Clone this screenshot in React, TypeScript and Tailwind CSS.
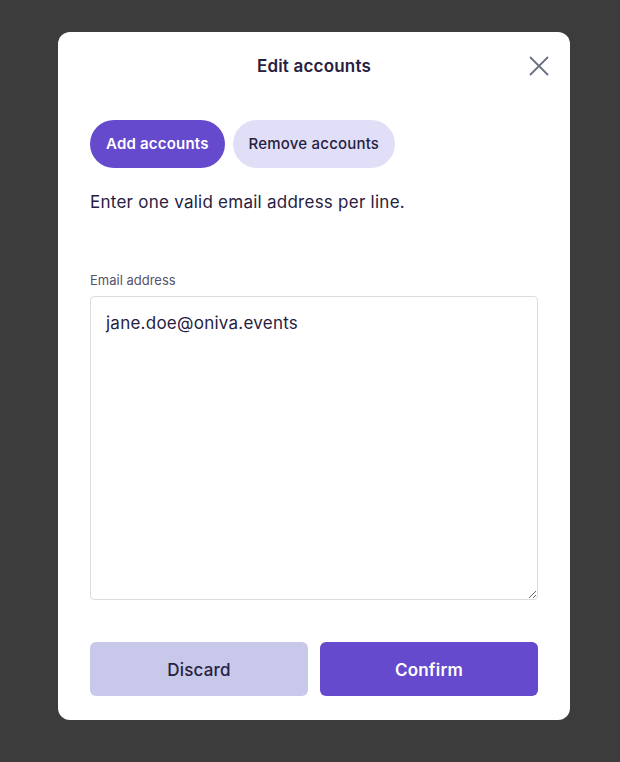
const App = () => {
  return (
    <div
      className="min-h-[762px] w-full bg-[#3c3c3c] pt-[32px] pl-[58px]"
      style={{ fontFamily: "Inter, 'Noto Sans', sans-serif" }}
    >
      <div className="w-[512px] rounded-[12px] bg-white px-[32px] pb-[24px]">
        <div className="relative flex h-[68px] items-center justify-center">
          <h2 className="mt-[2px] text-[17px] font-semibold tracking-[0.2px] text-[#27213f]">Edit accounts</h2>
          <button className="absolute right-[-11px] top-[24px] text-[#6b7083]">
            <svg width="20" height="20" viewBox="0 0 20 20" fill="none" stroke="currentColor" strokeWidth="1.8" strokeLinecap="round">
              <path d="M1.5 1.5L18.5 18.5M18.5 1.5L1.5 18.5" />
            </svg>
          </button>
        </div>

        <div className="mt-[20px] flex gap-[8px]">
          <button className="h-[48px] rounded-full bg-[#654acd] px-[16px] text-[15px] font-semibold tracking-[0.2px] text-white">
            Add accounts
          </button>
          <button className="h-[48px] rounded-full bg-[#e0dff7] px-[16px] text-[15px] font-medium tracking-[0.2px] text-[#27213f]">
            Remove accounts
          </button>
        </div>

        <p className="mt-[22px] text-[17px] leading-[24px] tracking-[0.25px] text-[#27213f]">
          Enter one valid email address per line.
        </p>

        <label className="mt-[58px] block text-[13px] leading-[16px] text-[#55526b]">Email address</label>
        <textarea
          className="mt-[8px] block h-[304px] w-full rounded-[4px] border border-[#dcdce3] px-[15px] py-[14px] text-[17px] leading-[24px] tracking-[0.25px] text-[#27213f] outline-none"
          defaultValue="jane.doe@oniva.events"
        />

        <div className="mt-[42px] grid grid-cols-2 gap-[12px]">
          <button className="h-[54px] rounded-[6px] bg-[#c8c8ea] pt-[3px] text-[17px] font-medium tracking-[0.2px] text-[#27213f]">
            Discard
          </button>
          <button className="h-[54px] rounded-[6px] bg-[#654acd] pt-[3px] text-[17px] font-semibold tracking-[0.2px] text-white">
            Confirm
          </button>
        </div>
      </div>
    </div>
  );
};

export default App;
